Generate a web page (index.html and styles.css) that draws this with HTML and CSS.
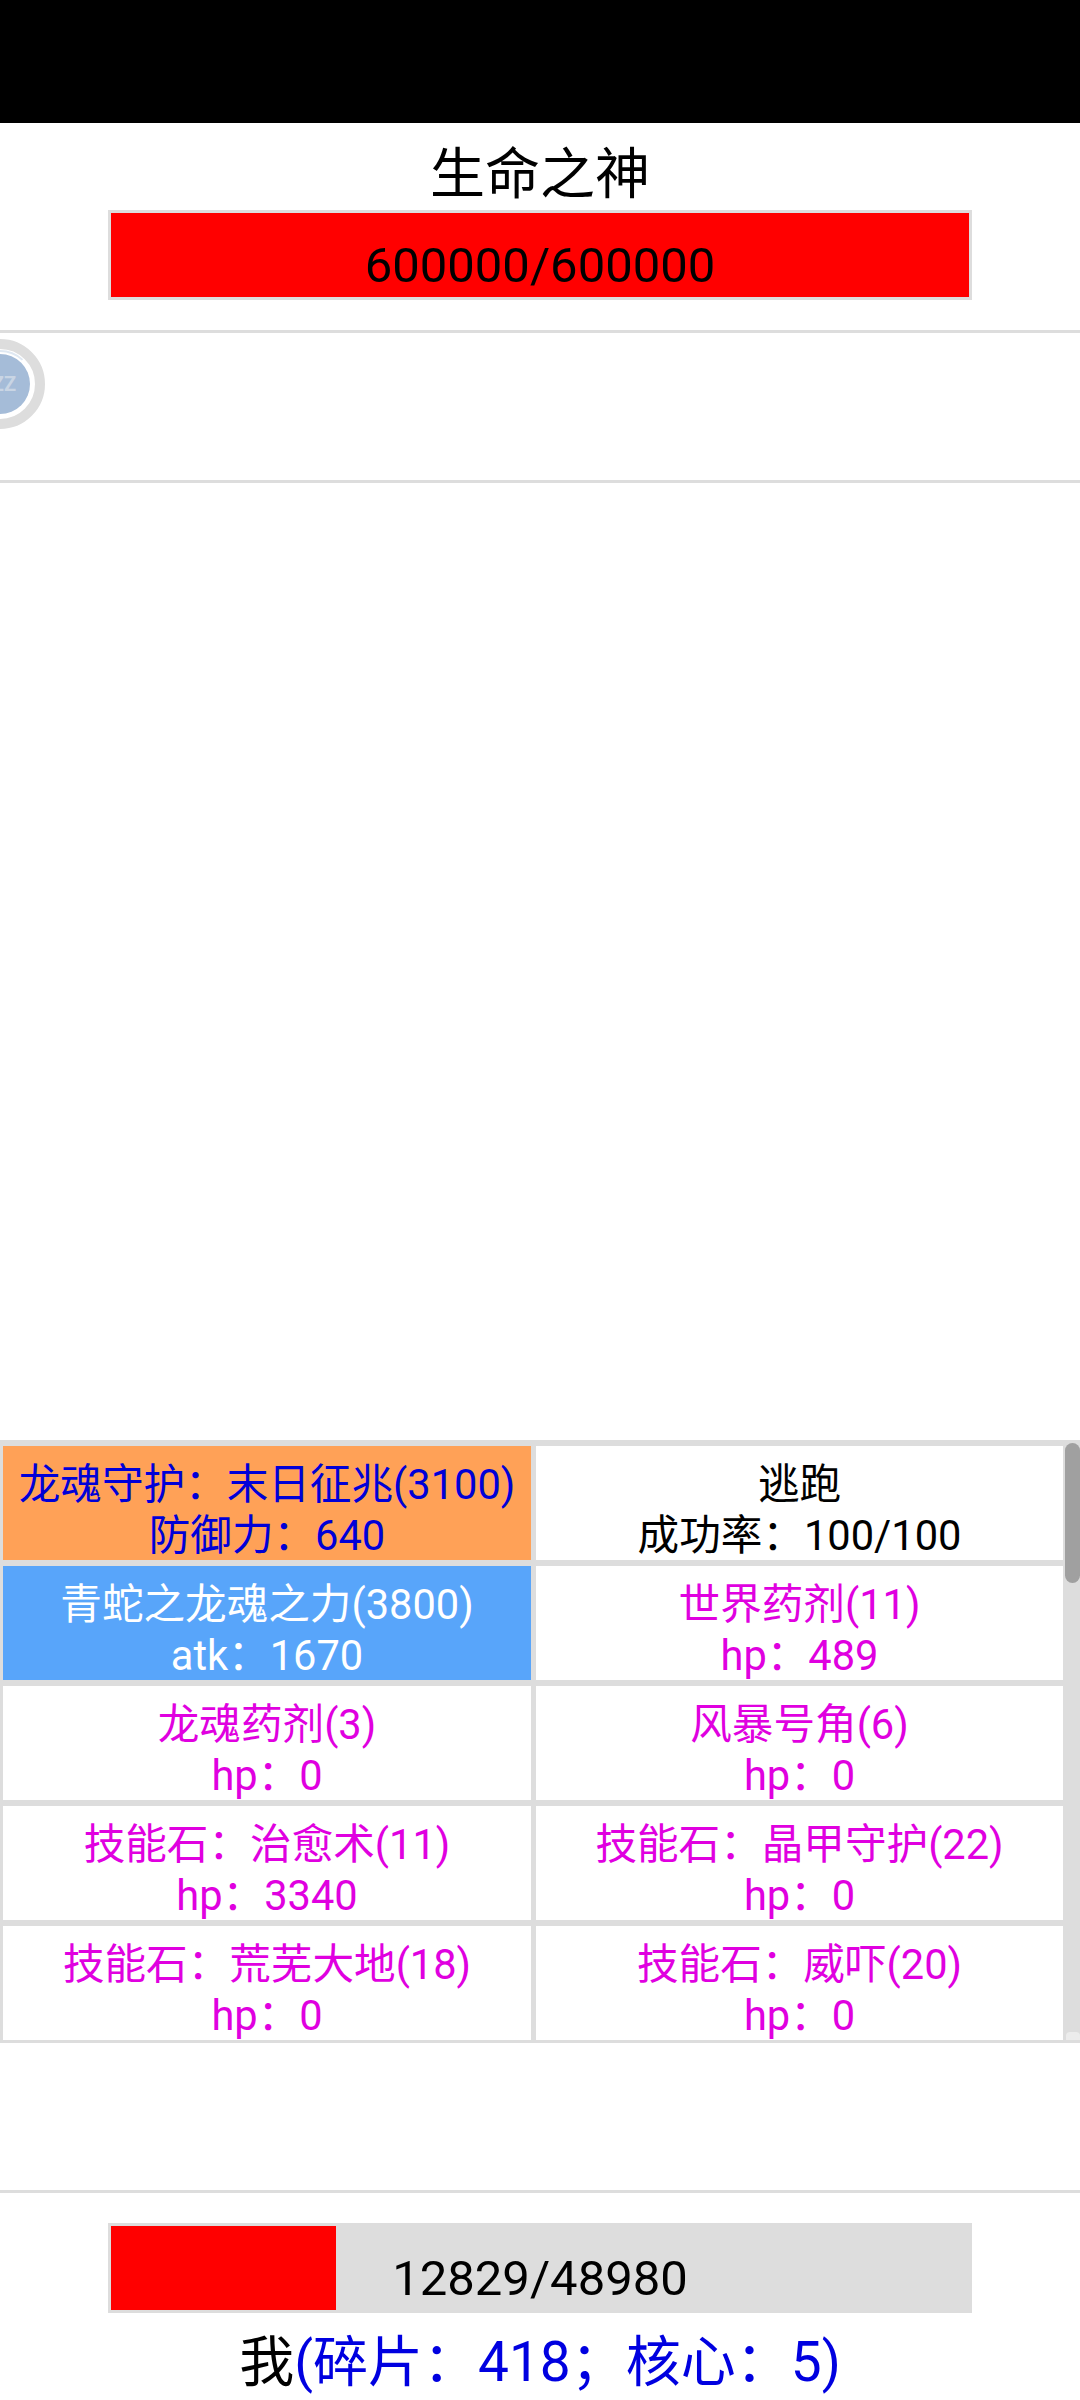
FILE: index.html
```html
<!DOCTYPE html>
<html lang="zh-CN">
  <head>
    <meta charset="UTF-8" />
    <meta name="viewport" content="width=device-width, initial-scale=1.0" />
    <title>生命之神</title>
    <link rel="stylesheet" href="styles.css">
  </head>
  <body>
    <div class="statusbar"></div>

    <!-- 敌人 -->
    <div class="enemy">
      <div class="name">生命之神</div>
      <div class="hpbar">
        <div class="hpfill full"></div>
        <span class="hptext">600000/600000</span>
      </div>
    </div>

    <!-- 状态 -->
    <div class="buffs">
      <svg class="buff" width="90" height="90" viewBox="0 0 90 90">
        <circle cx="45" cy="45" r="40" fill="#fff" stroke="#dddddd" stroke-width="10" />
        <circle cx="45" cy="45" r="33" fill="none" stroke="#dfe8f2" stroke-width="2" stroke-dasharray="30 180" stroke-dashoffset="60" />
        <circle cx="45" cy="45" r="30" fill="#a5bcd8" />
        <text x="49" y="52" class="buffzz">ZZ</text>
      </svg>
    </div>

    <div class="blank"></div>

    <!-- 技能列表 -->
    <div class="skills">
      <div class="skill orange">
        <div>龙魂守护：末日征兆(3100)</div>
        <div>防御力：640</div>
      </div>
      <div class="skill black">
        <div>逃跑</div>
        <div>成功率：100/100</div>
      </div>
      <div class="skill bluebg">
        <div>青蛇之龙魂之力(3800)</div>
        <div>atk：1670</div>
      </div>
      <div class="skill">
        <div>世界药剂(11)</div>
        <div>hp：489</div>
      </div>
      <div class="skill">
        <div>龙魂药剂(3)</div>
        <div>hp：0</div>
      </div>
      <div class="skill">
        <div>风暴号角(6)</div>
        <div>hp：0</div>
      </div>
      <div class="skill">
        <div>技能石：治愈术(11)</div>
        <div>hp：3340</div>
      </div>
      <div class="skill">
        <div>技能石：晶甲守护(22)</div>
        <div>hp：0</div>
      </div>
      <div class="skill">
        <div>技能石：荒芜大地(18)</div>
        <div>hp：0</div>
      </div>
      <div class="skill">
        <div>技能石：威吓(20)</div>
        <div>hp：0</div>
      </div>
      <div class="thumb"></div>
      <div class="grip"></div>
    </div>

    <!-- 我方 -->
    <div class="player">
      <div class="hpbar">
        <div class="hpfill" style="width: 26.19%"></div>
        <span class="hptext">12829/48980</span>
      </div>
      <div class="name">我<span class="res">(碎片：418；核心：5)</span></div>
    </div>
  </body>
</html>
```

FILE: styles.css
```css
* {
  box-sizing: border-box;
}
body {
  margin: 0;
  width: 1080px;
  height: 2400px;
  overflow: hidden;
  display: flex;
  flex-direction: column;
  background: #fff;
  font-family: Roboto, "Noto Sans CJK SC", sans-serif;
  color: #000;
}
.statusbar {
  height: 123px;
  background: #000;
}
.enemy {
  height: 207px;
  padding-top: 15px;
  display: flex;
  flex-direction: column;
  align-items: center;
}
.name {
  height: 72px;
  font-size: 55px;
  line-height: 72px;
  text-align: center;
}
.hpbar {
  position: relative;
  width: 864px;
  height: 90px;
  border: 3px solid #dddddd;
  background: #dddddd;
}
.hpfill {
  height: 100%;
  background: #ff0000;
}
.full {
  width: 100%;
}
.hptext {
  position: absolute;
  left: 0;
  right: 0;
  top: 21px;
  font-size: 49px;
  line-height: 64px;
  text-align: center;
}
.buffs {
  height: 153px;
  border-top: 3px solid #dddddd;
  border-bottom: 3px solid #dddddd;
  padding-top: 6px;
}
.buff {
  display: block;
  margin-left: -45px;
}
.buffzz {
  font-size: 20px;
  font-weight: bold;
  fill: #c9d5e4;
  text-anchor: middle;
}
.blank {
  height: 957px;
}
.skills {
  position: relative;
  height: 603px;
  padding: 6px 17px 0 3px;
  display: grid;
  grid-template-columns: 528px 527px;
  grid-auto-rows: 114px;
  column-gap: 5px;
  row-gap: 6px;
  background: #dddddd;
  overflow: hidden;
}
.skill {
  background: #fff;
  color: #e000e0;
  font-size: 41.6px;
  line-height: 51px;
  text-align: center;
  padding-top: 13px;
  overflow: hidden;
}
.orange {
  background: #ffa157;
  color: #0000d8;
}
.bluebg {
  background: #58a5fa;
  color: #fff;
}
.black {
  color: #000;
}
.thumb {
  position: absolute;
  top: 3px;
  right: 0;
  width: 15px;
  height: 140px;
  border-radius: 8px;
  background: #a0a0a0;
}
.grip {
  position: absolute;
  right: 0;
  bottom: 3px;
  width: 14px;
  height: 8px;
  background: #ececec;
  border-radius: 4px 4px 0 0;
}
.player {
  margin-top: 147px;
  border-top: 3px solid #dddddd;
  padding-top: 30px;
  display: flex;
  flex-direction: column;
  align-items: center;
}
.player .name {
  margin-top: 13px;
}
.res {
  color: #0000e0;
}
```
